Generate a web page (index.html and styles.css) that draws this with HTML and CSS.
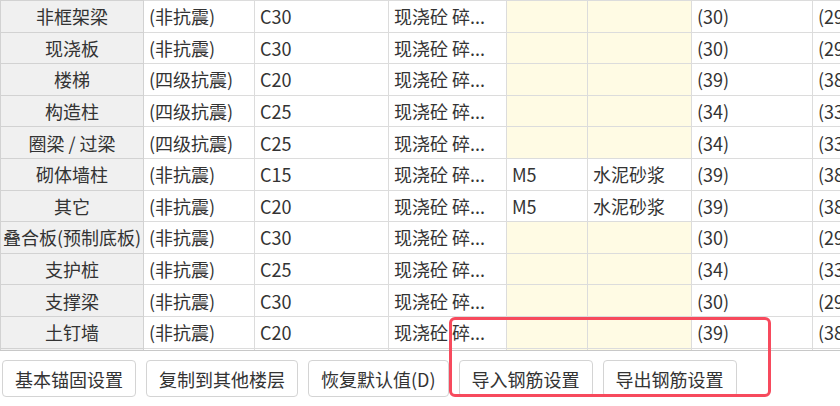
FILE: index.html
```html
<!DOCTYPE html>
<html lang="zh-CN">
<head>
<meta charset="utf-8">
<title>钢筋设置</title>
<link rel="stylesheet" href="styles.css">
</head>
<body>
<div class="page">
  <div class="grid-wrap">
    <table class="grid">
      <colgroup>
        <col class="c1"><col class="c2"><col class="c3"><col class="c4"><col class="c5"><col class="c6"><col class="c7"><col class="c8">
      </colgroup>
      <tbody>
        <tr><th>非框架梁</th><td>(非抗震)</td><td>C30</td><td>现浇砼 碎...</td><td class="y"></td><td class="y"></td><td>(30)</td><td>(29)</td></tr>
        <tr><th>现浇板</th><td>(非抗震)</td><td>C30</td><td>现浇砼 碎...</td><td class="y"></td><td class="y"></td><td>(30)</td><td>(29)</td></tr>
        <tr><th>楼梯</th><td>(四级抗震)</td><td>C20</td><td>现浇砼 碎...</td><td class="y"></td><td class="y"></td><td>(39)</td><td>(38)</td></tr>
        <tr><th>构造柱</th><td>(四级抗震)</td><td>C25</td><td>现浇砼 碎...</td><td class="y"></td><td class="y"></td><td>(34)</td><td>(33)</td></tr>
        <tr><th>圈梁 / 过梁</th><td>(四级抗震)</td><td>C25</td><td>现浇砼 碎...</td><td class="y"></td><td class="y"></td><td>(34)</td><td>(33)</td></tr>
        <tr><th>砌体墙柱</th><td>(非抗震)</td><td>C15</td><td>现浇砼 碎...</td><td>M5</td><td>水泥砂浆</td><td>(39)</td><td>(38)</td></tr>
        <tr><th>其它</th><td>(非抗震)</td><td>C20</td><td>现浇砼 碎...</td><td>M5</td><td>水泥砂浆</td><td>(39)</td><td>(38)</td></tr>
        <tr><th>叠合板(预制底板)</th><td>(非抗震)</td><td>C30</td><td>现浇砼 碎...</td><td class="y"></td><td class="y"></td><td>(30)</td><td>(29)</td></tr>
        <tr><th>支护桩</th><td>(非抗震)</td><td>C25</td><td>现浇砼 碎...</td><td class="y"></td><td class="y"></td><td>(34)</td><td>(33)</td></tr>
        <tr><th>支撑梁</th><td>(非抗震)</td><td>C30</td><td>现浇砼 碎...</td><td class="y"></td><td class="y"></td><td>(30)</td><td>(29)</td></tr>
        <tr><th>土钉墙</th><td>(非抗震)</td><td>C20</td><td>现浇砼 碎...</td><td class="y"></td><td class="y"></td><td>(39)</td><td>(38)</td></tr>
        <tr><th></th><td></td><td></td><td></td><td class="y"></td><td class="y"></td><td></td><td></td></tr>
      </tbody>
    </table>
  </div>
  <div class="buttons">
    <button class="btn">基本锚固设置</button>
    <button class="btn">复制到其他楼层</button>
    <button class="btn">恢复默认值(D)</button>
    <button class="btn">导入钢筋设置</button>
    <button class="btn">导出钢筋设置</button>
  </div>
  <div class="highlight"></div>
</div>
</body>
</html>
```

FILE: styles.css
```css
* { box-sizing: border-box; }
html, body {
  margin: 0;
  padding: 0;
  background: #ffffff;
}
body {
  font-family: "Noto Sans CJK SC", "Noto Sans", sans-serif;
  font-size: 18px;
  color: #333333;
}
.page {
  position: relative;
  width: 840px;
  height: 406px;
  overflow: hidden;
}
.grid-wrap {
  height: 351px;
  overflow: hidden;
  border-bottom: 1px solid #c8c8c8;
}
.grid {
  border-collapse: collapse;
  table-layout: fixed;
  width: 932px;
}
.c1 { width: 143px; }
.c2 { width: 111px; }
.c3 { width: 134px; }
.c4 { width: 118px; }
.c5 { width: 81px; }
.c6 { width: 104px; }
.c7 { width: 121px; }
.c8 { width: 120px; }
.grid tr { height: 31.6px; }
.grid th, .grid td {
  border: 1px solid #dcdcdc;
  padding: 0 0 0 5px;
  white-space: nowrap;
  overflow: hidden;
  line-height: 20px;
  font-weight: normal;
  text-align: left;
}
.grid th {
  background: #f0f0f0;
  text-align: center;
  padding: 0;
  border-color: #d2d2d2;
}
.grid td.y {
  background: #fffbe4;
}
.buttons {
  display: flex;
  gap: 10px;
  padding: 9px 0 0 2px;
}
.btn {
  font-family: inherit;
  font-size: 18px;
  color: #333333;
  background: #ffffff;
  border: 1px solid #d4d4d4;
  border-radius: 4px;
  height: 37px;
  padding: 0 12px;
  line-height: 20px;
}
.highlight {
  position: absolute;
  left: 449px;
  top: 317px;
  width: 322px;
  height: 80px;
  border: 3px solid #f74a5d;
  border-radius: 6px;
}
```
